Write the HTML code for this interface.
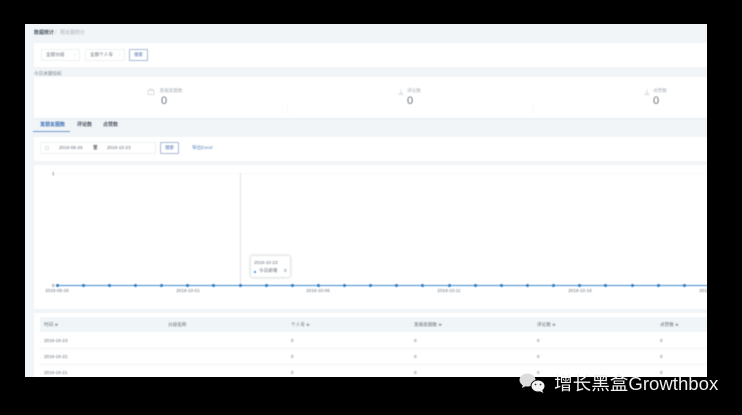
<!DOCTYPE html>
<html lang="zh">
<head>
<meta charset="utf-8">
<title>朋友圈统计</title>
<style>
html,body{margin:0;padding:0;width:742px;height:415px;background:#000;overflow:hidden}
body{position:relative;font-family:"Liberation Sans","Noto Sans CJK SC",sans-serif}
#page{position:absolute;left:25px;top:24px;width:682px;height:353px;background:#f1f5f7;overflow:hidden}
#in{position:absolute;left:0;top:0;width:682px;height:353px;filter:blur(.45px)}
.a{position:absolute;white-space:nowrap;line-height:1}
.card{position:absolute;background:#fff}
.t{font-size:4.6px;color:#66707a}
.btn{position:absolute;border:1px solid #a9b8d6;border-radius:1px;background:#fff;color:#4a6aa8;font-size:4.4px;text-align:center;box-sizing:border-box}
.sel{position:absolute;border:1px solid #edf0f3;background:#fff;box-sizing:border-box;height:12px;border-radius:1px}
.num{font-size:11px;color:#6a7179;transform:translateX(-50%)}
.lab{font-size:4.6px;color:#a6adb5;transform:translateX(-50%)}
.pt{position:absolute;width:3px;height:3px;border-radius:50%;background:#2a78c4;top:260px}
.xl{position:absolute;top:265px;font-size:4.6px;color:#6c7680;transform:translateX(-50%);white-space:nowrap;line-height:1}
</style>
</head>
<body>
<div id="page"><div id="in">
  <div class="a" style="left:9px;top:7px;font-size:5px;color:#4c5560;font-weight:bold">数据统计</div>
  <div class="a" style="left:30px;top:7px;font-size:5px;color:#b4bcc6">/</div>
  <div class="a" style="left:35px;top:7px;font-size:5px;color:#aab3bd">朋友圈统计</div>

  <div class="card" style="left:9px;top:19px;width:690px;height:24px"></div>
  <div class="sel" style="left:16px;top:25px;width:39px"></div>
  <div class="a t" style="left:21px;top:29px">全部分组</div>
  <div class="a" style="left:48px;top:28px;font-size:4px;color:#c4cad1">⌄</div>
  <div class="sel" style="left:60px;top:25px;width:40px"></div>
  <div class="a t" style="left:65px;top:29px">全部个人号</div>
  <div class="a" style="left:93px;top:28px;font-size:4px;color:#c4cad1">⌄</div>
  <div class="btn" style="left:104px;top:25px;width:19px;height:12px;line-height:10px">搜索</div>

  <div class="a t" style="left:9px;top:48px;color:#7d868f">今日关键指标</div>
  <div class="card" style="left:9px;top:53px;width:690px;height:41px;box-shadow:0 1px 1px #e8ebee"></div>
  <svg class="a" style="left:122px;top:64px" width="8" height="7" viewBox="0 0 8 7"><path d="M1 2.500h6v4H1zM2.500 2.500V1h3v1.500" fill="none" stroke="#d0d4d9" stroke-width=".8"/></svg>
  <div class="a lab" style="left:146px;top:65px">发朋友圈数</div>
  <div class="a num" style="left:139px;top:71.500px">0</div>
  <div style="position:absolute;left:262px;top:78px;width:1px;height:12px;background:#f7f8f9"></div>
  <svg class="a" style="left:373px;top:65px" width="6" height="6" viewBox="0 0 6 6"><path d="M3 .5v3M1 5.500h4L3 3.500z" fill="none" stroke="#d0d4d9" stroke-width=".7"/></svg>
  <div class="a lab" style="left:389px;top:65px">评论数</div>
  <div class="a num" style="left:385px;top:71.500px">0</div>
  <div style="position:absolute;left:508px;top:78px;width:1px;height:12px;background:#f7f8f9"></div>
  <svg class="a" style="left:619px;top:65px" width="6" height="6" viewBox="0 0 6 6"><path d="M3 .5v3M1 5.500h4L3 3.500z" fill="none" stroke="#d0d4d9" stroke-width=".7"/></svg>
  <div class="a lab" style="left:635px;top:65px">点赞数</div>
  <div class="a num" style="left:631px;top:71.500px">0</div>

  <div class="a" style="left:15px;top:99px;font-size:5px;color:#3f6fb5;font-weight:bold">发朋友圈数</div>
  <div style="position:absolute;left:8px;top:107px;width:37px;height:1px;background:#6f97cc"></div>
  <div class="a" style="left:52px;top:99px;font-size:5px;color:#4c5560;font-weight:bold">评论数</div>
  <div class="a" style="left:78px;top:99px;font-size:5px;color:#4c5560;font-weight:bold">点赞数</div>

  <div class="card" style="left:9px;top:113px;width:690px;height:24px"></div>
  <div class="sel" style="left:15px;top:118px;width:116px;height:12px"></div>
  <div style="position:absolute;left:20px;top:122px;width:4px;height:4px;border:1px solid #e0e3e7;box-sizing:border-box"></div>
  <div class="a t" style="left:34px;top:122px">2019-09-26</div>
  <div class="a t" style="left:68px;top:122px;font-weight:bold;color:#444">至</div>
  <div class="a t" style="left:82px;top:122px">2019-10-23</div>
  <div class="btn" style="left:135px;top:118px;width:19px;height:12px;line-height:10px">搜索</div>
  <div class="a" style="left:167px;top:122px;font-size:4.6px;color:#5f84bd">导出Excel</div>

  <div class="card" style="left:9px;top:141px;width:690px;height:144px"></div>
  <div class="a t" style="left:27px;top:148px;color:#555">1</div>
  <div style="position:absolute;left:31px;top:149px;width:670px;height:1px;background:#f7f8f9"></div>
  <div class="a t" style="left:27px;top:260px;color:#555">0</div>
  <div style="position:absolute;left:215px;top:149px;width:1px;height:112px;background:#dfe2e6"></div>
  <div style="position:absolute;left:31px;top:261px;width:670px;height:1px;background:#3f87cc"></div>
  <div class="pt" style="left:30.500px"></div>
  <div class="pt" style="left:56.700px"></div>
  <div class="pt" style="left:82.800px"></div>
  <div class="pt" style="left:108.900px"></div>
  <div class="pt" style="left:135px"></div>
  <div class="pt" style="left:161.200px"></div>
  <div class="pt" style="left:187.300px"></div>
  <div class="pt" style="left:213.500px"></div>
  <div class="pt" style="left:239.600px"></div>
  <div class="pt" style="left:265.700px"></div>
  <div class="pt" style="left:291.900px"></div>
  <div class="pt" style="left:318px"></div>
  <div class="pt" style="left:344.100px"></div>
  <div class="pt" style="left:370.300px"></div>
  <div class="pt" style="left:396.400px"></div>
  <div class="pt" style="left:422.500px"></div>
  <div class="pt" style="left:448.700px"></div>
  <div class="pt" style="left:474.800px"></div>
  <div class="pt" style="left:500.900px"></div>
  <div class="pt" style="left:527.100px"></div>
  <div class="pt" style="left:553.200px"></div>
  <div class="pt" style="left:579.300px"></div>
  <div class="pt" style="left:605.500px"></div>
  <div class="pt" style="left:631.600px"></div>
  <div class="pt" style="left:657.700px"></div>
  <div class="xl" style="left:32px">2019-09-26</div>
  <div class="xl" style="left:163px">2019-10-01</div>
  <div class="xl" style="left:293px">2019-10-06</div>
  <div class="xl" style="left:424px">2019-10-11</div>
  <div class="xl" style="left:555px">2019-10-16</div>
  <div class="xl" style="left:686px">2019-10-21</div>

  <div style="position:absolute;left:226px;top:232px;width:39px;height:21px;background:#fff;border-radius:2px;box-shadow:0 0 2px 1px #d5dae0"></div>
  <div class="a t" style="left:229px;top:237px">2019-10-23</div>
  <div style="position:absolute;left:229px;top:247px;width:2px;height:2px;border-radius:50%;background:#2f7fc9"></div>
  <div class="a t" style="left:234px;top:245px">今日新增</div>
  <div class="a t" style="left:259px;top:245px">0</div>

  <div class="card" style="left:9px;top:289px;width:690px;height:80px"></div>
  <div style="position:absolute;left:15px;top:293px;width:685px;height:15px;background:#f0f5f7"></div>
  <div class="a t" style="left:19px;top:299px">时间 ≑</div>
  <div class="a t" style="left:143px;top:299px">分组名称</div>
  <div class="a t" style="left:266px;top:299px">个人号 ≑</div>
  <div class="a t" style="left:389px;top:299px">发朋友圈数 ≑</div>
  <div class="a t" style="left:512px;top:299px">评论数 ≑</div>
  <div class="a t" style="left:635px;top:299px">点赞数 ≑</div>

  <div style="position:absolute;left:15px;top:324px;width:685px;height:1px;background:#f1f3f5"></div>
  <div style="position:absolute;left:15px;top:340px;width:685px;height:1px;background:#f1f3f5"></div>

  <div class="a t" style="left:19px;top:315px">2019-10-23</div>
  <div class="a t" style="left:266px;top:315px">0</div>
  <div class="a t" style="left:389px;top:315px">0</div>
  <div class="a t" style="left:512px;top:315px">0</div>
  <div class="a t" style="left:635px;top:315px">0</div>

  <div class="a t" style="left:19px;top:331px">2019-10-22</div>
  <div class="a t" style="left:266px;top:331px">0</div>
  <div class="a t" style="left:389px;top:331px">0</div>
  <div class="a t" style="left:512px;top:331px">0</div>
  <div class="a t" style="left:635px;top:331px">0</div>

  <div class="a t" style="left:19px;top:347px">2019-10-21</div>
  <div class="a t" style="left:266px;top:347px">0</div>
  <div class="a t" style="left:389px;top:347px">0</div>
  <div class="a t" style="left:512px;top:347px">0</div>
  <div class="a t" style="left:635px;top:347px">0</div>
</div></div>

<svg style="position:absolute;left:518px;top:372px" width="32" height="22" viewBox="0 0 32 22">
  <ellipse cx="9.500" cy="8" rx="8" ry="6.500" fill="#dcdcdc"/>
  <path d="M5 12l-1 4 5-2.500z" fill="#dcdcdc"/>
  <ellipse cx="20" cy="14" rx="7.500" ry="6.200" fill="#000"/>
  <ellipse cx="20" cy="14" rx="6.500" ry="5.500" fill="#f2f2f2"/>
  <path d="M24 18l1.500 3-4-2z" fill="#f2f2f2"/>
  <circle cx="17.500" cy="12.500" r=".9" fill="#333"/>
  <circle cx="22.500" cy="12.500" r=".9" fill="#333"/>
</svg>
<div class="a" style="left:554px;top:375px;font-size:18.600px;color:#f0f0f0;font-family:'Liberation Sans','Noto Sans CJK SC',sans-serif">增长黑盒Growthbox</div>
</body>
</html>
